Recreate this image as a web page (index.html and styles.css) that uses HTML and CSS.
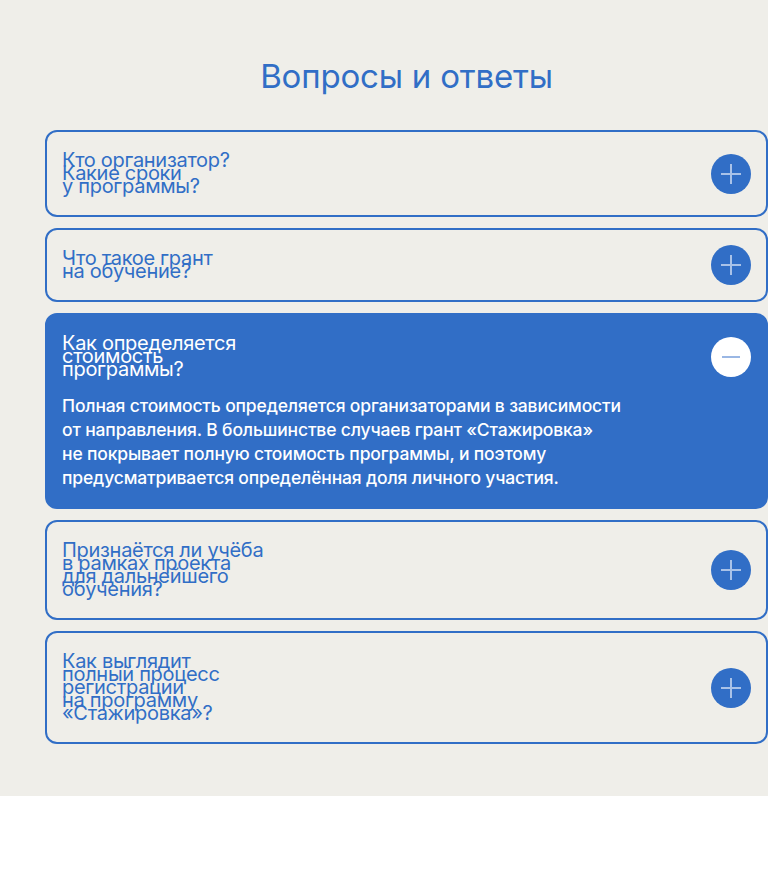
FILE: index.html
```html
<!DOCTYPE html>
<html lang="ru">
<head>
<meta charset="utf-8">
<title>Вопросы и ответы</title>
<link rel="stylesheet" href="styles.css">
</head>
<body>
<section class="faq">
  <h2 class="faq-title">Вопросы и ответы</h2>
  <div class="faq-list">
    <div class="faq-item">
      <div class="faq-head">
        <p class="faq-q">Кто организатор?<br>Какие сроки<br>у программы?</p>
        <span class="faq-btn"><svg viewBox="0 0 40 40" width="40" height="40"><path d="M10 20H30M20 10V30" stroke="#a9c2e8" stroke-width="2" fill="none"/></svg></span>
      </div>
    </div>
    <div class="faq-item">
      <div class="faq-head">
        <p class="faq-q">Что такое грант<br>на обучение?</p>
        <span class="faq-btn"><svg viewBox="0 0 40 40" width="40" height="40"><path d="M10 20H30M20 10V30" stroke="#a9c2e8" stroke-width="2" fill="none"/></svg></span>
      </div>
    </div>
    <div class="faq-item is-open">
      <div class="faq-head">
        <p class="faq-q">Как определяется<br>стоимость<br>программы?</p>
        <span class="faq-btn"><svg viewBox="0 0 40 40" width="40" height="40"><path d="M11 20H29" stroke="#9ab7e4" stroke-width="2" fill="none"/></svg></span>
      </div>
      <p class="faq-a">Полная стоимость определяется организаторами в зависимости<br>от направления. В большинстве случаев грант «Стажировка»<br>не покрывает полную стоимость программы, и поэтому<br>предусматривается определённая доля личного участия.</p>
    </div>
    <div class="faq-item">
      <div class="faq-head">
        <p class="faq-q">Признаётся ли учёба<br>в рамках проекта<br>для дальнейшего<br>обучения?</p>
        <span class="faq-btn"><svg viewBox="0 0 40 40" width="40" height="40"><path d="M10 20H30M20 10V30" stroke="#a9c2e8" stroke-width="2" fill="none"/></svg></span>
      </div>
    </div>
    <div class="faq-item">
      <div class="faq-head">
        <p class="faq-q">Как выглядит<br>полный процесс<br>регистрации<br>на программу<br>«Стажировка»?</p>
        <span class="faq-btn"><svg viewBox="0 0 40 40" width="40" height="40"><path d="M10 20H30M20 10V30" stroke="#a9c2e8" stroke-width="2" fill="none"/></svg></span>
      </div>
    </div>
  </div>
</section>
</body>
</html>
```
FILE: styles.css
```css
html, body {
  margin: 0;
  padding: 0;
  background: #ffffff;
}
body {
  font-family: Inter, "Noto Sans", sans-serif;
}
.faq {
  background: #efeee9;
  padding: 57px 0 52px 45px;
}
.faq-title {
  margin: 0 0 34px;
  text-align: center;
  font-size: 33px;
  font-weight: 400;
  line-height: 39px;
  color: #316ec6;
  letter-spacing: -0.2px;
}
.faq-list {
  display: flex;
  flex-direction: column;
  gap: 11px;
}
.faq-item {
  border: 2px solid #316ec6;
  border-radius: 12px;
  padding: 15px;
  color: #316ec6;
}
.faq-item.is-open {
  background: #316ec6;
  color: #ffffff;
  padding-bottom: 17px;
}
.faq-head {
  display: flex;
  align-items: center;
  justify-content: space-between;
}
.faq-q {
  margin: 0;
  padding: 7px 0;
  font-size: 20px;
  line-height: 13px;
  font-weight: 400;
  letter-spacing: -0.3px;
}
.faq-btn {
  width: 40px;
  height: 40px;
  border-radius: 50%;
  background: #316ec6;
  display: flex;
  flex-shrink: 0;
}
.is-open .faq-btn {
  background: #ffffff;
}
.faq-a {
  margin: 11px 0 0;
  font-size: 17.5px;
  line-height: 24px;
  font-weight: 500;
  letter-spacing: -0.15px;
}
```
